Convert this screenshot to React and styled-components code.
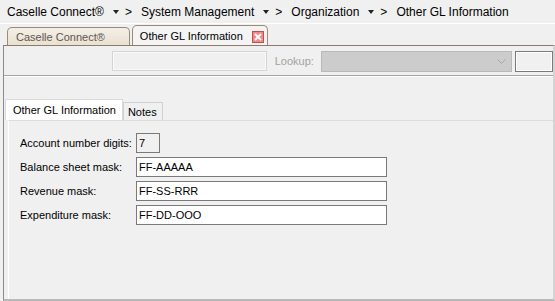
import React from "react";
import styled, { createGlobalStyle } from "styled-components";

const GlobalStyle = createGlobalStyle`
  body {
    margin: 0;
    background: #f0f0f0;
    font-family: "Liberation Sans", Arial, sans-serif;
  }
`;

const Window = styled.div`
  width: 555px;
  height: 301px;
  background: #f0f0f0;
  display: flex;
  flex-direction: column;
  overflow: hidden;
`;

const Breadcrumb = styled.div`
  height: 23px;
  display: flex;
  align-items: center;
  padding-left: 7px;
  border-bottom: 1px solid #ffffff;
  font-size: 12px;
  color: #000;
`;

const Crumb = styled.span`
  white-space: nowrap;
`;

const Sep = styled.span`
  display: flex;
  align-items: center;
  margin: 0 9px 0 9px;
  gap: 6px;
  font-size: 12px;
`;

const Caret = styled.span`
  width: 0;
  height: 0;
  border-left: 3px solid transparent;
  border-right: 3px solid transparent;
  border-top: 4px solid #222;
`;

const TabStrip = styled.div`
  height: 21px;
  display: flex;
  align-items: flex-end;
  padding-left: 7px;
  gap: 2px;
`;

const DocTab = styled.div`
  height: ${({ $active }) => ($active ? "20px" : "18px")};
  box-sizing: border-box;
  display: flex;
  align-items: center;
  gap: 9px;
  padding: 0 ${({ $active }) => ($active ? "3px" : "24px")} 0 ${({ $active }) => ($active ? "7px" : "8px")};
  border: 1px solid #9a8a78;
  border-bottom: none;
  border-radius: 5px 5px 0 0;
  font-size: 11px;
  color: ${({ $active }) => ($active ? "#000" : "#5e5650")};
  background: ${({ $active }) =>
    $active ? "#f4f4f4" : "linear-gradient(#f4efe6, #e9e1d3)"};
  white-space: nowrap;
`;

const CloseBox = styled.span`
  width: 12px;
  height: 12px;
  box-sizing: border-box;
  border: 1px solid #c0504f;
  background: #ec8b89;
  display: flex;
  align-items: center;
  justify-content: center;
  margin-top: 2px;
`;

const Content = styled.div`
  flex: 1;
  display: flex;
  flex-direction: column;
  border-top: 1px solid #8d7b69;
  margin-left: 3px;
  border-left: 1px solid #8a8a8a;
  border-right: 2px solid #d4d4d4;
  border-bottom: 2px solid #b8b8b8;
  min-height: 0;
`;

const Toolbar = styled.div`
  height: 30px;
  box-sizing: border-box;
  display: flex;
  align-items: flex-start;
  padding: 5px 0 0 108px;
  border-bottom: 1px solid #a4a4a4;
  box-shadow: 0 1px 0 #ffffff;
`;

const DisabledInput = styled.div`
  width: 163px;
  height: 20px;
  box-sizing: border-box;
  border: 1px solid #d4d4d4;
  box-shadow: inset 0 0 0 1px #fafafa;
  background: #f0f0f0;
`;

const LookupLabel = styled.span`
  margin: 4px 7px 0 8px;
  font-size: 11px;
  color: #a2a2a2;
`;

const LookupSelect = styled.div`
  width: 201px;
  height: 21px;
  box-sizing: border-box;
  border: 1px solid #b9b9b9;
  background: #cccccc;
  display: flex;
  align-items: center;
  justify-content: flex-end;
  padding-right: 5px;
`;

const ExtraBox = styled.div`
  width: 40px;
  height: 21px;
  margin-left: 3px;
  box-sizing: border-box;
  border: 1px solid #7a7a7a;
  box-shadow: inset 0 0 0 1px #ffffff;
  background: #f0f0f0;
`;

const FormArea = styled.div`
  flex: 1;
  display: flex;
  flex-direction: column;
  padding: 23px 0 0 1px;
  min-height: 0;
`;

const InnerTabs = styled.div`
  display: flex;
  align-items: flex-end;
  height: 21px;
`;

const InnerTab = styled.div`
  height: ${({ $active }) => ($active ? "21px" : "18px")};
  box-sizing: border-box;
  padding: ${({ $active }) => ($active ? "4px 6px 0 7px" : "3px 5px 0 4px")};
  border: 1px solid ${({ $active }) => ($active ? "#dadada" : "#d0d0d0")};
  border-bottom: none;
  background: ${({ $active }) => ($active ? "#ffffff" : "#f0f0f0")};
  font-size: 11px;
  color: #000;
  white-space: nowrap;
`;

const Panel = styled.div`
  flex: 1;
  margin-left: 3px;
  border-top: 1px solid #dcdcdc;
  border-left: 1px solid #ffffff;
  padding: 12px 0 0 11px;
`;

const FormGrid = styled.div`
  display: grid;
  grid-template-columns: 116px auto;
  row-gap: 4px;
  align-items: center;
  justify-content: start;
`;

const Label = styled.span`
  font-size: 11px;
  color: #000;
  white-space: nowrap;
`;

const Field = styled.div`
  width: ${({ $width }) => $width}px;
  height: 20px;
  box-sizing: border-box;
  border: 1px solid #7a7a7a;
  background: ${({ $plain }) => ($plain ? "#f0f0f0" : "#ffffff")};
  font-size: 11px;
  line-height: 18px;
  padding-left: 2px;
  color: #000;
`;

const rows = [
  { label: "Account number digits:", value: "7", width: 24, plain: true },
  { label: "Balance sheet mask:", value: "FF-AAAAA", width: 251 },
  { label: "Revenue mask:", value: "FF-SS-RRR", width: 251 },
  { label: "Expenditure mask:", value: "FF-DD-OOO", width: 251 },
];

const crumbs = ["Caselle Connect®", "System Management", "Organization", "Other GL Information"];

export default function App() {
  return (
    <>
      <GlobalStyle />
      <Window>
        <Breadcrumb>
          {crumbs.map((c, i) => (
            <React.Fragment key={c}>
              <Crumb>{c}</Crumb>
              {i < crumbs.length - 1 && (
                <Sep>
                  <Caret />
                  <span>&gt;</span>
                </Sep>
              )}
            </React.Fragment>
          ))}
        </Breadcrumb>
        <TabStrip>
          <DocTab>Caselle Connect®</DocTab>
          <DocTab $active>
            Other GL Information
            <CloseBox>
              <svg width="8" height="8" viewBox="0 0 8 8">
                <path d="M1 1L7 7M7 1L1 7" stroke="#fff" strokeWidth="1.8" />
              </svg>
            </CloseBox>
          </DocTab>
        </TabStrip>
        <Content>
          <Toolbar>
            <DisabledInput />
            <LookupLabel>Lookup:</LookupLabel>
            <LookupSelect>
              <svg width="9" height="6" viewBox="0 0 9 6">
                <path d="M0.5 0.5L4.5 4.5L8.5 0.5" fill="none" stroke="#a8a8a8" strokeWidth="1" />
              </svg>
            </LookupSelect>
            <ExtraBox />
          </Toolbar>
          <FormArea>
            <InnerTabs>
              <InnerTab $active>Other GL Information</InnerTab>
              <InnerTab>Notes</InnerTab>
            </InnerTabs>
            <Panel>
              <FormGrid>
                {rows.map((r) => (
                  <React.Fragment key={r.label}>
                    <Label>{r.label}</Label>
                    <Field $width={r.width} $plain={r.plain}>
                      {r.value}
                    </Field>
                  </React.Fragment>
                ))}
              </FormGrid>
            </Panel>
          </FormArea>
        </Content>
      </Window>
    </>
  );
}
